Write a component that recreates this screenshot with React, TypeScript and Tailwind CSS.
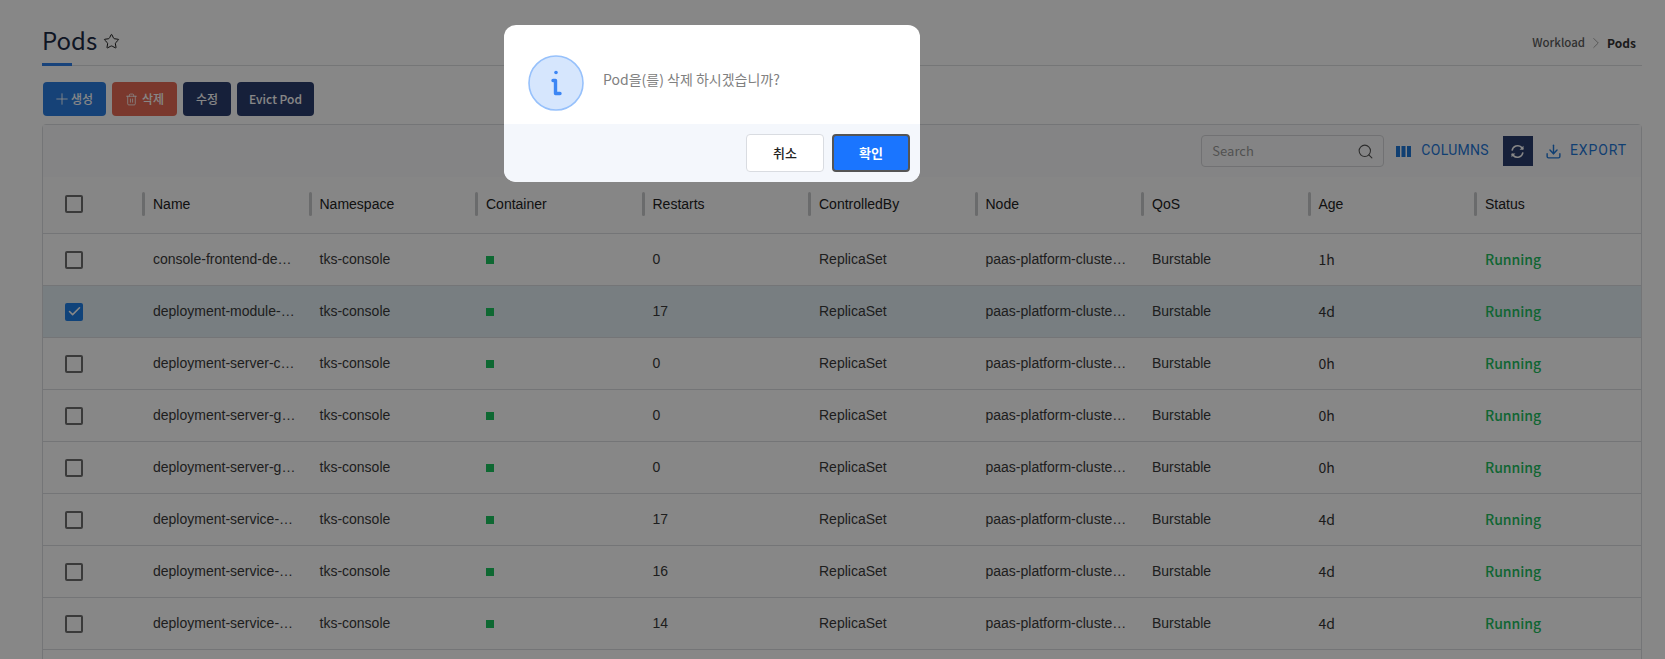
import { Star, Plus, Trash2, Search, Check, ChevronRight, Download } from "lucide-react"

const kr = "font-['Noto_Sans_CJK_KR','Noto_Sans',sans-serif]"

const columns = ["Name", "Namespace", "Container", "Restarts", "ControlledBy", "Node", "QoS", "Age", "Status"]

const pods = [
  { name: "console-frontend-deployment-7c9d", restarts: 0, age: "1h" },
  { name: "deployment-module-server-6f8b9c", restarts: 17, age: "4d", checked: true },
  { name: "deployment-server-core-5d7f8b", restarts: 0, age: "0h" },
  { name: "deployment-server-gateway-64c", restarts: 0, age: "0h" },
  { name: "deployment-server-grpc-77fd9c", restarts: 0, age: "0h" },
  { name: "deployment-service-auth-58d7c", restarts: 17, age: "4d" },
  { name: "deployment-service-batch-6b9f", restarts: 16, age: "4d" },
  { name: "deployment-service-cluster-7c", restarts: 14, age: "4d" },
  { name: "deployment-service-event-5c8", restarts: 14, age: "4d" },
]

function Checkbox({ checked }: { checked?: boolean }) {
  if (checked) {
    return (
      <span className="flex h-[18px] w-[18px] items-center justify-center rounded-[2px] bg-[#1f7fe6]">
        <Check className="h-[15px] w-[15px] text-white" strokeWidth={2.5} />
      </span>
    )
  }
  return <span className="block h-[18px] w-[18px] rounded-[2px] border-2 border-[#6e6e6e]" />
}

function Cell({ children }: { children: React.ReactNode }) {
  return <div className="truncate pl-[11px] pr-[12px] font-['Liberation_Sans',sans-serif] text-[14px] text-[#3a3a3a]">{children}</div>
}

function InfoIcon() {
  return (
    <svg viewBox="0 0 56 56" className="h-14 w-14">
      <circle cx="28" cy="28" r="27" fill="#d6e6fd" stroke="#97c1fb" strokeWidth="1.6" />
      <circle cx="28" cy="17.5" r="1.8" fill="#3c86f4" />
      <path d="M25 25.5H27.5V38.5H32" fill="none" stroke="#3c86f4" strokeWidth="3.4" strokeLinecap="round" strokeLinejoin="round" />
    </svg>
  )
}

function SyncIcon() {
  return (
    <svg viewBox="0 0 16 16" className="h-[15px] w-[15px]" fill="none" stroke="white" strokeWidth="1.6">
      <path d="M2.2 7A6 6 0 0 1 12.4 3.6L14 5.2" />
      <path d="M13.8 9A6 6 0 0 1 3.6 12.4L2 10.8" />
      <path d="M14.4 1.8V6H10.2Z" fill="white" stroke="none" />
      <path d="M1.6 14.2V10H5.8Z" fill="white" stroke="none" />
    </svg>
  )
}

export default function App() {
  return (
    <div className={`relative h-[659px] overflow-hidden bg-white pl-[42px] pr-[23px] ${kr}`}>
      {/* Page header */}
      <div className="relative flex h-[66px] items-end justify-between border-b border-[#dedfe1] pb-[7px]">
        <div className="flex items-center gap-[6px]">
          <h1 className="text-[24px] leading-[36px] text-[#1c2a45]">Pods</h1>
          <Star className="mt-[2px] h-[17px] w-[17px] text-[#1b1b1b]" strokeWidth={1.4} />
        </div>
        <div className="flex items-center pb-[6px] pr-[6px] text-[12px] font-medium">
          <span className="text-[11.5px] text-[#5c5c5c]">Workload</span>
          <ChevronRight className="mx-[2px] h-[18px] w-[18px] text-[#8a8a8a]" strokeWidth={1} />
          <span className="font-bold text-[#333]">Pods</span>
        </div>
        <div className="absolute bottom-[-1px] left-0 h-[3px] w-[30px] bg-[#2f7fe8]" />
      </div>

      {/* Actions */}
      <div className="mt-[16px] flex gap-[6px] pl-[1px] text-[12px] font-medium text-white">
        <button className="flex h-[34px] w-[63px] items-center justify-center rounded-[4px] bg-[#2a7de1] pr-[3px]">
          <Plus className="h-[18px] w-[18px]" strokeWidth={1.2} />
          생성
        </button>
        <button className="flex h-[34px] w-[65px] items-center justify-center gap-[4px] rounded-[4px] bg-[#e66a55]">
          <Trash2 className="h-[13px] w-[13px]" strokeWidth={1.5} />
          삭제
        </button>
        <button className="h-[34px] w-[48px] rounded-[4px] bg-[#2b3d6e]">수정</button>
        <button className="h-[34px] w-[77px] rounded-[4px] bg-[#2b3d6e]">Evict Pod</button>
      </div>

      {/* Table card */}
      <div className="mt-[8px] rounded-t-[4px] border border-[#dcdde0]">
        <div className="flex h-[52px] items-center justify-end bg-[#fafafb] pr-[14px]">
          <div className="flex h-[32px] w-[183px] items-center justify-between rounded-[4px] border border-[#d5d6d9] pl-[10px] pr-[9px]">
            <span className="text-[13px] text-[#9a9a9a]">Search</span>
            <Search className="h-[17px] w-[17px] text-[#555]" strokeWidth={1.5} />
          </div>
          <div className="ml-[12px] mt-[-2px] flex items-center gap-[10px] font-['Roboto',sans-serif] text-[14px] tracking-[0.3px] text-[#1f77d8]">
            <svg viewBox="0 0 15 11" className="mt-[2px] h-[11px] w-[15px] fill-current">
              <rect width="4" height="11" />
              <rect x="5.5" width="4" height="11" />
              <rect x="11" width="4" height="11" />
            </svg>
            COLUMNS
          </div>
          <div className="ml-[14px] flex h-[30px] w-[30px] items-center justify-center bg-[#2b3d6e]">
            <SyncIcon />
          </div>
          <div className="ml-[12px] mt-[-2px] flex items-center gap-[8px] font-['Roboto',sans-serif] text-[14px] tracking-[0.9px] text-[#1f77d8]">
            <Download className="mt-[2px] h-[17px] w-[17px]" strokeWidth={2} />
            EXPORT
          </div>
        </div>

        <div className="grid h-[57px] grid-cols-[99px_repeat(8,166.5px)_minmax(0,1fr)] items-center border-b border-[#dcdde0] bg-[#fdfdfd] pb-[2px]">
          <div className="pl-[22px]">
            <Checkbox />
          </div>
          {columns.map((c) => (
            <div key={c} className="relative pl-[11px] font-['Liberation_Sans',sans-serif] text-[14px] text-[#222]">
              <span className="absolute left-0 top-[-2px] h-[24px] w-[3px] rounded-[2px] bg-[#c9cacc]" />
              {c}
            </div>
          ))}
        </div>

        {pods.map((p) => (
          <div
            key={p.name}
            className={`grid h-[52px] grid-cols-[99px_repeat(8,166.5px)_minmax(0,1fr)] items-center border-b border-[#dcdde0] ${p.checked ? "bg-[#e2eef4]" : "bg-white"}`}
          >
            <div className="pl-[22px]">
              <Checkbox checked={p.checked} />
            </div>
            <Cell>{p.name}</Cell>
            <Cell>tks-console</Cell>
            <div className="pl-[11px]">
              <span className="block h-[8px] w-[8px] bg-[#1cc45f]" />
            </div>
            <Cell>{p.restarts}</Cell>
            <Cell>ReplicaSet</Cell>
            <Cell>paas-platform-cluster-worker-node</Cell>
            <Cell>Burstable</Cell>
            <div className="pl-[11px] text-[14px] text-[#333]">{p.age}</div>
            <div className="pl-[11px] text-[14px] font-medium text-[#21c060]">Running</div>
          </div>
        ))}
      </div>

      {/* Dim layer and confirm dialog */}
      <div className="fixed inset-0 bg-black/[.47]">
        <div className="ml-[504px] mt-[25px] w-[416px] overflow-hidden rounded-[12px] bg-white">
          <div className="flex h-[99px] items-start pl-[24px] pt-[30px]">
            <InfoIcon />
            <p className="ml-[19px] mt-[14px] text-[14px] text-[#808080]">Pod을(를) 삭제 하시겠습니까?</p>
          </div>
          <div className="flex h-[58px] justify-end gap-[8px] bg-[#f4f7fc] pr-[10px] pt-[10px] text-[13px] font-medium">
            <button className="h-[38px] w-[78px] rounded-[4px] border border-[#d9dce1] bg-white text-[#222]">취소</button>
            <button className="h-[38px] w-[78px] rounded-[4px] border-2 border-[#555] bg-[#1a75ff] font-semibold text-white">확인</button>
          </div>
        </div>
      </div>
    </div>
  )
}
